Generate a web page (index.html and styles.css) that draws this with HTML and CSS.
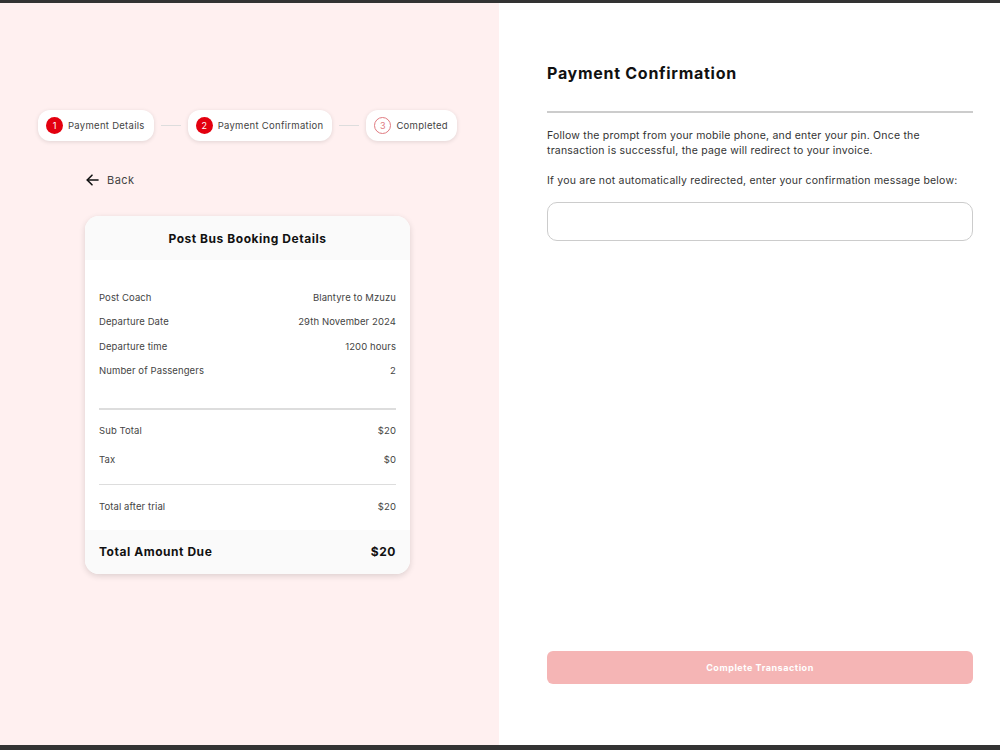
FILE: index.html
```html
<!DOCTYPE html>
<html lang="en">
<head>
  <meta charset="UTF-8">
  <meta name="viewport" content="width=device-width, initial-scale=1.0">
  <title>Payment Confirmation</title>
  <link rel="stylesheet" href="styles.css">
</head>
<body>
  <div class="frame-top"></div>
  <div class="page">
    <div class="left-panel">
      <div class="steps">
        <div class="step">
          <span class="step-num filled">1</span>
          <span>Payment Details</span>
        </div>
        <div class="step-line"></div>
        <div class="step">
          <span class="step-num filled">2</span>
          <span>Payment Confirmation</span>
        </div>
        <div class="step-line"></div>
        <div class="step">
          <span class="step-num outline">3</span>
          <span>Completed</span>
        </div>
      </div>

      <div class="summary">
        <a class="back" href="#">
          <svg width="13" height="12" viewBox="0 0 13 12" fill="none" stroke="#111" stroke-width="1.6" stroke-linecap="round" stroke-linejoin="round">
            <path d="M12 6H1.5"/>
            <path d="M6 1.2L1.2 6 6 10.8"/>
          </svg>
          <span>Back</span>
        </a>

        <div class="card">
          <div class="card-head">Post Bus Booking Details</div>
          <div class="card-body">
            <div class="row"><span>Post Coach</span><span>Blantyre to Mzuzu</span></div>
            <div class="row"><span>Departure Date</span><span>29th November 2024</span></div>
            <div class="row"><span>Departure time</span><span>1200 hours</span></div>
            <div class="row"><span>Number of Passengers</span><span>2</span></div>
          </div>
          <div class="divider"></div>
          <div class="totals">
            <div class="row"><span>Sub Total</span><span>$20</span></div>
            <div class="row tall"><span>Tax</span><span>$0</span></div>
          </div>
          <div class="divider"></div>
          <div class="row after"><span>Total after trial</span><span>$20</span></div>
          <div class="card-foot">
            <span>Total Amount Due</span>
            <span>$20</span>
          </div>
        </div>
      </div>
    </div>

    <div class="right-panel">
      <h1>Payment Confirmation</h1>
      <hr class="rule">
      <p>Follow the prompt from your mobile phone, and enter your pin. Once the transaction is successful, the page will redirect to your invoice.</p>
      <p class="second">If you are not automatically redirected, enter your confirmation message below:</p>
      <input type="text" class="confirm-input">
      <div class="spacer"></div>
      <button class="complete" disabled>Complete Transaction</button>
    </div>
  </div>
  <div class="frame-bottom"></div>
</body>
</html>
```

FILE: styles.css
```css
body {
  margin: 0;
  height: 750px;
  display: flex;
  flex-direction: column;
  font-family: Inter, "Open Sans", sans-serif;
  letter-spacing: 0.03em;
  color: #222;
  background-color: #333;
}
.frame-top {
  height: 3px;
  background-color: #333;
}
.frame-bottom {
  height: 5px;
  background-color: #333;
}
.page {
  flex: 1;
  display: flex;
}
.left-panel {
  width: 499px;
  background-color: #fff0f0;
  padding-top: 107px;
  box-sizing: border-box;
}
.right-panel {
  flex: 1;
  background-color: #fff;
  display: flex;
  flex-direction: column;
  padding: 60px 27px 61px 48px;
}

/* steps */
.steps {
  display: flex;
  align-items: center;
  padding-left: 38px;
}
.step {
  display: flex;
  align-items: center;
  gap: 5px;
  height: 31px;
  padding: 0 9px 0 8px;
  background-color: #fff;
  border-radius: 12px;
  box-shadow: 0 1px 4px rgba(0, 0, 0, 0.12);
  font-size: 9.5px;
  letter-spacing: 0.03em;
  color: #444;
}
.step-num {
  width: 17px;
  height: 17px;
  border-radius: 50%;
  display: flex;
  align-items: center;
  justify-content: center;
  font-size: 9px;
  letter-spacing: 0;
  box-sizing: border-box;
}
.step-num.filled {
  background-color: #e3000f;
  color: #fff;
}
.step-num.outline {
  border: 1px solid #e07a80;
  color: #e07a80;
}
.step-line {
  width: 20px;
  height: 1px;
  background-color: #ddd;
  margin: 0 7px;
}

/* summary card */
.summary {
  margin-left: 85px;
  width: 325px;
}
.back {
  display: flex;
  align-items: center;
  gap: 8px;
  margin: 32px 0 0 1px;
  font-size: 11px;
  color: #444;
  text-decoration: none;
}
.card {
  margin-top: 29px;
  background-color: #fff;
  border-radius: 14px;
  box-shadow: 0 2px 6px rgba(0, 0, 0, 0.14);
  overflow: hidden;
}
.card-head {
  height: 44px;
  display: flex;
  align-items: center;
  justify-content: center;
  background-color: #fafafa;
  font-size: 12px;
  font-weight: 700;
  letter-spacing: 0.045em;
  color: #111;
}
.card-body {
  padding: 25px 0 25px;
}
.row {
  display: flex;
  justify-content: space-between;
  padding: 0 14px;
  height: 24.5px;
  align-items: center;
  font-size: 9.5px;
  letter-spacing: 0.01em;
  color: #444;
}
.divider {
  height: 1.5px;
  margin: 0 14px;
  background-color: #ddd;
}
.totals {
  padding: 9px 0 7px;
}
.totals .row.tall {
  height: 33.5px;
}
.row.after {
  height: 24px;
  margin: 9.5px 0 11px;
}
.card-foot {
  display: flex;
  justify-content: space-between;
  align-items: center;
  height: 44px;
  padding: 0 14px;
  background-color: #fafafa;
  font-size: 12px;
  font-weight: 700;
  letter-spacing: 0.045em;
  color: #111;
}

/* right side */
h1 {
  margin: 0;
  font-size: 16px;
  font-weight: 700;
  letter-spacing: 0.045em;
  color: #111;
}
.rule {
  margin: 28px 0 15px;
  border: none;
  height: 2px;
  background-color: #ccc;
}
p {
  margin: 0;
  font-size: 10.5px;
  line-height: 15px;
  letter-spacing: 0.02em;
  color: #333;
}
p.second {
  margin-top: 15px;
  white-space: nowrap;
}
.confirm-input {
  margin-top: 14px;
  height: 39px;
  border: 1px solid #ccc;
  border-radius: 10px;
  box-sizing: border-box;
}
.spacer {
  flex: 1;
}
.complete {
  height: 33px;
  border: none;
  border-radius: 6px;
  background-color: #f5b5b5;
  color: #fff;
  font-family: inherit;
  font-size: 9px;
  font-weight: 700;
  letter-spacing: 0.06em;
}
```
